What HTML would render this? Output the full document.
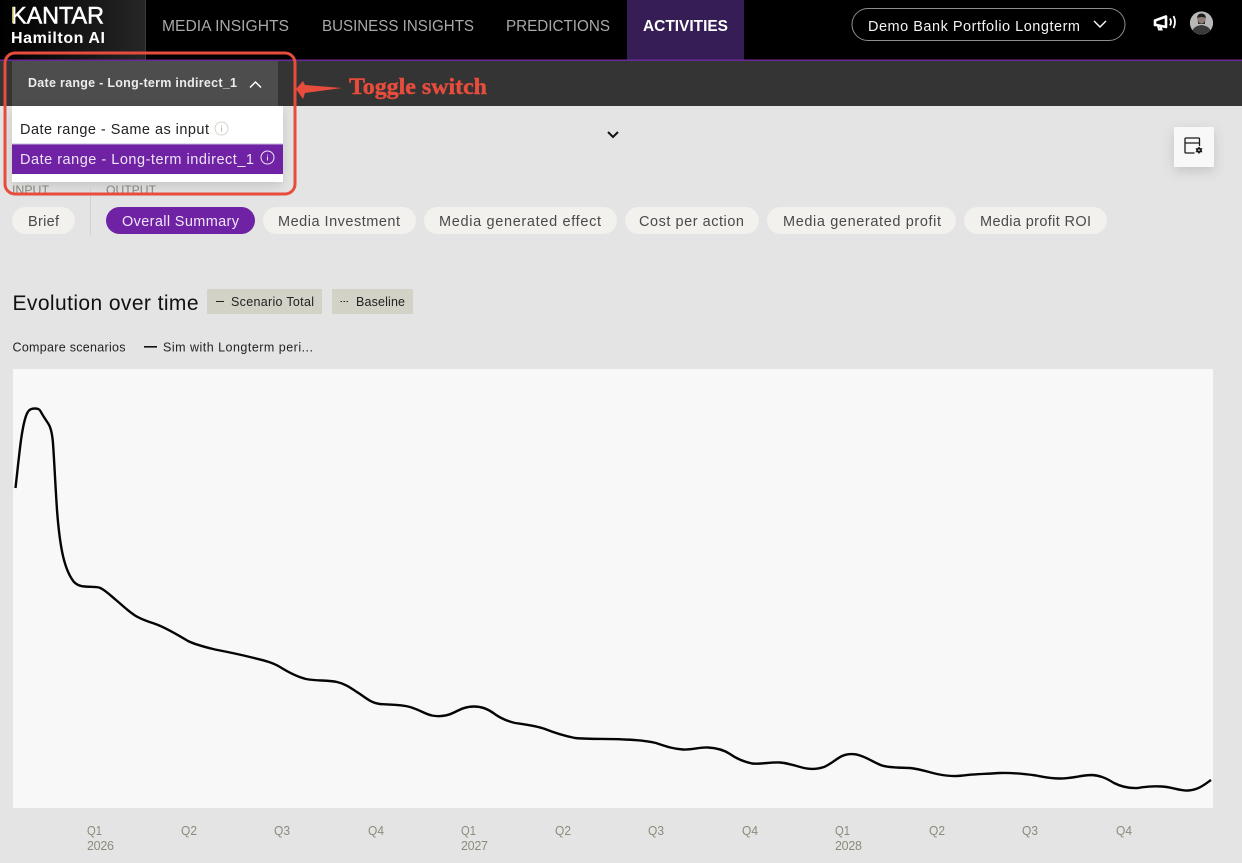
<!DOCTYPE html>
<html lang="en">
<head>
<meta charset="utf-8">
<title>Kantar Hamilton AI</title>
<style>
html,body{margin:0;padding:0;background:#e4e4e4;}
body{width:1242px;height:863px;overflow:hidden;}
svg{display:block;}
text{font-family:"Liberation Sans",sans-serif;}
</style>
</head>
<body>
<svg width="1242" height="863" viewBox="0 0 1242 863" xmlns="http://www.w3.org/2000/svg">
<defs>
<linearGradient id="logo" x1="0" x2="1" y1="0" y2="0"><stop offset="0" stop-color="#000"/><stop offset="1" stop-color="#262626"/></linearGradient>
<filter id="sh" x="-30%" y="-30%" width="160%" height="170%"><feDropShadow dx="0" dy="4" stdDeviation="6" flood-color="#000" flood-opacity=".14"/></filter>
<clipPath id="av"><circle cx="1201.5" cy="23" r="11.5"/></clipPath>
</defs>

<rect width="1242" height="863" fill="#e4e4e4"/>

<!-- header -->
<rect width="1242" height="60" fill="#000"/>
<rect width="145" height="60" fill="url(#logo)"/>
<rect x="145" width="1" height="60" fill="#3c3c3c"/>
<text x="11" y="23.500" font-size="24" fill="#fff" stroke="#fff" stroke-width=".5" textLength="93" lengthAdjust="spacingAndGlyphs">KANTAR</text>
<rect x="12" y="7" width="1.500" height="16" fill="#c9b458"/>
<text x="11" y="43" font-size="16" font-weight="700" fill="#fff" textLength="94" lengthAdjust="spacing">Hamilton AI</text>
<text x="162" y="31" font-size="16" fill="#a9a9a9" textLength="127" lengthAdjust="spacingAndGlyphs">MEDIA INSIGHTS</text>
<text x="322" y="31" font-size="16" fill="#a9a9a9" textLength="152" lengthAdjust="spacingAndGlyphs">BUSINESS INSIGHTS</text>
<text x="506" y="31" font-size="16" fill="#a9a9a9" textLength="104" lengthAdjust="spacingAndGlyphs">PREDICTIONS</text>
<rect x="627" y="0" width="117" height="60" fill="#361d55"/>
<text x="643" y="31" font-size="16" font-weight="700" fill="#fff" textLength="85" lengthAdjust="spacingAndGlyphs">ACTIVITIES</text>

<rect x="852" y="8.500" width="273" height="32" rx="16" fill="none" stroke="#8d8d8d" stroke-width="1"/>
<text x="868" y="31" font-size="14.500" fill="#f2f2f2" textLength="212" lengthAdjust="spacing">Demo Bank Portfolio Longterm</text>
<path d="M1094 21l6 6 6-6" fill="none" stroke="#fff" stroke-width="1.400"/>

<!-- megaphone -->
<path d="M1155 20.500l1.500-.5 9.500-3.500v10.500l-9.500-2h-1.500z" fill="none" stroke="#fff" stroke-width="2.600" stroke-linejoin="round"/>
<path d="M1158 26l1 3.500h2.500l-1-3" fill="none" stroke="#fff" stroke-width="2"/>
<path d="M1170 18.500q2 3.500 0 7M1173.500 16q3 6 0 12" fill="none" stroke="#fff" stroke-width="1.800"/>
<!-- avatar -->
<circle cx="1201.500" cy="23" r="11.500" fill="#cfcfcf"/>
<g clip-path="url(#av)">
<rect x="1190" y="11" width="23" height="24" fill="#b8b8b8"/>
<path d="M1191 35q1-9 10.500-10 9.500 1 10.500 10z" fill="#3a3a3a"/>
<circle cx="1201.500" cy="19.500" r="4.300" fill="#8b7d75"/>
<path d="M1197 18q.5-4.500 4.500-4.500t4.500 4.500q-4.500-2-9 0z" fill="#1e1e1e"/>
<path d="M1198 21q3.500 5 7 0v3h-7z" fill="#333"/>
</g>

<!-- toolbar -->
<rect y="59.500" width="1242" height="2" fill="#6b2a98"/>
<rect y="61" width="1242" height="45" fill="#343434"/>
<rect x="12" y="61" width="266" height="45" fill="#4d4d4d"/>
<text x="28" y="87" font-size="12.500" font-weight="700" fill="#ececec" textLength="209" lengthAdjust="spacing">Date range - Long-term indirect_1</text>
<path d="M250 87.500l5.500-5.500 5.500 5.500" fill="none" stroke="#fff" stroke-width="1.500"/>

<!-- main top -->
<path d="M608 132l5 5 5-5" fill="none" stroke="#111" stroke-width="2"/>
<g filter="url(#sh)"><rect x="1174" y="127" width="40" height="40" fill="#f8f8f8"/></g>
<path d="M1199.500 146v-7q0-1-1-1h-12.500q-1 0-1 1v13q0 1 1 1h8.500M1185 143h14.500" fill="none" stroke="#1a1a1a" stroke-width="1.300"/>
<path d="M1199 146.500l1.500 1.700h2l-.9 2 .9 2h-2l-1.500 1.700-1.500-1.700h-2l.9-2-.9-2h2z" fill="#1a1a1a"/>
<circle cx="1199" cy="150.200" r=".8" fill="#f8f8f8"/>

<!-- dropdown -->
<text x="12" y="194" font-size="11.500" fill="#8b8b80" textLength="37" lengthAdjust="spacingAndGlyphs">INPUT</text>
<text x="106" y="194" font-size="11.500" fill="#8b8b80" textLength="50" lengthAdjust="spacingAndGlyphs">OUTPUT</text>
<g filter="url(#sh)"><rect x="12" y="106" width="271" height="76" fill="#fff"/></g>
<text x="20" y="134" font-size="14.500" fill="#222" textLength="189" lengthAdjust="spacing">Date range - Same as input</text>
<circle cx="221.500" cy="128.500" r="6.500" fill="none" stroke="#d6d6cc" stroke-width="1"/>
<rect x="221" y="127.500" width="1" height="4" fill="#b8b8ad"/><rect x="221" y="125.500" width="1" height="1" fill="#b8b8ad"/>
<rect x="12" y="144" width="271" height="30" fill="#6f22a4"/>
<rect x="12" y="143.500" width="271" height="1" fill="#c9b9dc"/>
<text x="20" y="164" font-size="14.500" fill="#eee4f5" textLength="234" lengthAdjust="spacing">Date range - Long-term indirect_1</text>
<circle cx="267.500" cy="157.500" r="6.500" fill="none" stroke="#eee4f5" stroke-width="1"/>
<rect x="267" y="156.500" width="1" height="4" fill="#eee4f5"/><rect x="267" y="154.500" width="1" height="1" fill="#eee4f5"/>

<!-- tabs -->
<rect x="90" y="184" width="1" height="51" fill="#d2d2c8"/>
<rect x="12" y="207" width="63" height="27" rx="13.500" fill="#f2f1ee"/>
<text x="28" y="226" font-size="14.500" fill="#4a4a4a" textLength="31" lengthAdjust="spacing">Brief</text>
<rect x="106" y="207" width="149" height="27" rx="13.500" fill="#6f22a4"/>
<text x="122" y="226" font-size="14.500" fill="#f0e6f7" textLength="117" lengthAdjust="spacing">Overall Summary</text>
<rect x="263" y="207" width="153" height="27" rx="13.500" fill="#f2f1ee"/>
<text x="278" y="226" font-size="14.500" fill="#4a4a4a" textLength="122" lengthAdjust="spacing">Media Investment</text>
<rect x="424" y="207" width="193" height="27" rx="13.500" fill="#f2f1ee"/>
<text x="439" y="226" font-size="14.500" fill="#4a4a4a" textLength="162" lengthAdjust="spacing">Media generated effect</text>
<rect x="625" y="207" width="134" height="27" rx="13.500" fill="#f2f1ee"/>
<text x="639" y="226" font-size="14.500" fill="#4a4a4a" textLength="105" lengthAdjust="spacing">Cost per action</text>
<rect x="767" y="207" width="189" height="27" rx="13.500" fill="#f2f1ee"/>
<text x="783" y="226" font-size="14.500" fill="#4a4a4a" textLength="158" lengthAdjust="spacing">Media generated profit</text>
<rect x="964" y="207" width="143" height="27" rx="13.500" fill="#f2f1ee"/>
<text x="980" y="226" font-size="14.500" fill="#4a4a4a" textLength="111" lengthAdjust="spacing">Media profit ROI</text>

<!-- section title -->
<text x="12.500" y="310" font-size="21" fill="#111" textLength="186" lengthAdjust="spacing">Evolution over time</text>
<rect x="207" y="289" width="115" height="25" fill="#d2d2c7"/>
<rect x="216" y="301" width="8" height="1" fill="#222"/>
<text x="231" y="306" font-size="12.500" fill="#222" textLength="83" lengthAdjust="spacing">Scenario Total</text>
<rect x="332" y="289" width="81" height="25" fill="#d2d2c7"/>
<path d="M340.500 301.500h7.500" stroke="#222" stroke-width="1" stroke-dasharray="1.500 1.500"/>
<text x="356" y="306" font-size="12.500" fill="#222" textLength="49" lengthAdjust="spacing">Baseline</text>

<text x="12.500" y="351.500" font-size="12.500" fill="#222" textLength="113" lengthAdjust="spacing">Compare scenarios</text>
<rect x="144" y="346" width="13" height="1.600" fill="#111"/>
<text x="163" y="351.500" font-size="12.500" fill="#222" textLength="150" lengthAdjust="spacing">Sim with Longterm peri...</text>

<!-- chart -->
<rect x="13" y="369" width="1200" height="439" fill="#f8f8f8"/>
<path d="M15.500 488C17 475 19 455 21 440C23 426 25 417 27.500 412.500C29.500 409 32 408.500 35 408.500C38 408.500 39.500 409 41 412C43 416 46 420 48.500 424C51 428 52 433 52.800 441C54 455 55 480 57 510C58.500 530 60.500 545 63 556C66 569 70 577 74 582C77 585 81 586.500 85 586.500C90 587 95 586.500 99 587.500C104 589 110 595 116 600C122 605 128 611 135 615.500C142 620 150 622 158 625C168 629 178 635 188 641C196 645 205 647 215 649.500C228 652 240 654.500 252 657.500C262 660 272 662 280 667C288 672 298 677 306 679C316 681 328 680 337 682C346 684 352 689 360 694C367 699 372 703 380 704C390 705 400 704 410 707C420 710 425 714 432 715.500C440 717 447 716 454 712.500C461 709 466 706.500 474 706.500C482 706.500 488 709 494 713.500C500 718 507 721 515 723C525 724.500 535 725.500 545 729C555 733 565 736 575 738C590 739.500 610 738.500 625 739.500C638 740 648 741 656 743C665 746 673 749 683 749.500C692 750 700 747 708 747.500C717 748 724 750 730 754C737 759 745 762 752 763.500C760 764.500 770 762 780 762.500C788 763 796 766 804 768C811 769.500 818 769 824 767C831 764 836 759 842 756C848 753.500 855 753.500 860 755.500C868 758 875 763 882 765.500C890 768 900 767.500 910 768C920 769 928 772 937 774C946 776 955 776.500 963 775.500C973 774 985 774 1000 773C1012 772.500 1025 774 1036 775.500C1044 777 1050 778.500 1060 778.500C1072 778.500 1082 775 1092 775C1100 775.500 1106 778 1114 783C1122 787 1130 788.500 1138 788C1146 786.500 1154 786 1162 786.500C1172 787 1180 791 1188 790.500C1198 790 1204 785 1211 780" fill="none" stroke="#050505" stroke-width="2.400" stroke-linejoin="round" stroke-linecap="butt"/>

<!-- axis -->
<g font-size="12.500" fill="#8b8b7c">
<text x="87" y="835" textLength="15" lengthAdjust="spacingAndGlyphs">Q1</text>
<text x="87" y="850" textLength="27" lengthAdjust="spacing">2026</text>
<text x="181" y="835" textLength="16" lengthAdjust="spacingAndGlyphs">Q2</text>
<text x="274" y="835" textLength="16" lengthAdjust="spacingAndGlyphs">Q3</text>
<text x="368" y="835" textLength="16" lengthAdjust="spacingAndGlyphs">Q4</text>
<text x="461" y="835" textLength="15" lengthAdjust="spacingAndGlyphs">Q1</text>
<text x="461" y="850" textLength="27" lengthAdjust="spacing">2027</text>
<text x="555" y="835" textLength="16" lengthAdjust="spacingAndGlyphs">Q2</text>
<text x="648" y="835" textLength="16" lengthAdjust="spacingAndGlyphs">Q3</text>
<text x="742" y="835" textLength="16" lengthAdjust="spacingAndGlyphs">Q4</text>
<text x="835" y="835" textLength="15" lengthAdjust="spacingAndGlyphs">Q1</text>
<text x="835" y="850" textLength="27" lengthAdjust="spacing">2028</text>
<text x="929" y="835" textLength="16" lengthAdjust="spacingAndGlyphs">Q2</text>
<text x="1022" y="835" textLength="16" lengthAdjust="spacingAndGlyphs">Q3</text>
<text x="1116" y="835" textLength="16" lengthAdjust="spacingAndGlyphs">Q4</text>
</g>

<!-- annotation -->
<rect x="5" y="53" width="290" height="141" rx="10" fill="none" stroke="#e74c3c" stroke-width="3"/>
<path d="M342 88L305 85L303 81L296 89L303 99L305 93z" fill="#e74c3c"/>
<text x="349" y="94" font-size="23" font-weight="700" fill="#e74c3c" stroke="#e74c3c" stroke-width=".4" style="font-family:'Liberation Serif',serif" textLength="138" lengthAdjust="spacingAndGlyphs">Toggle switch</text>
</svg>
</body>
</html>
